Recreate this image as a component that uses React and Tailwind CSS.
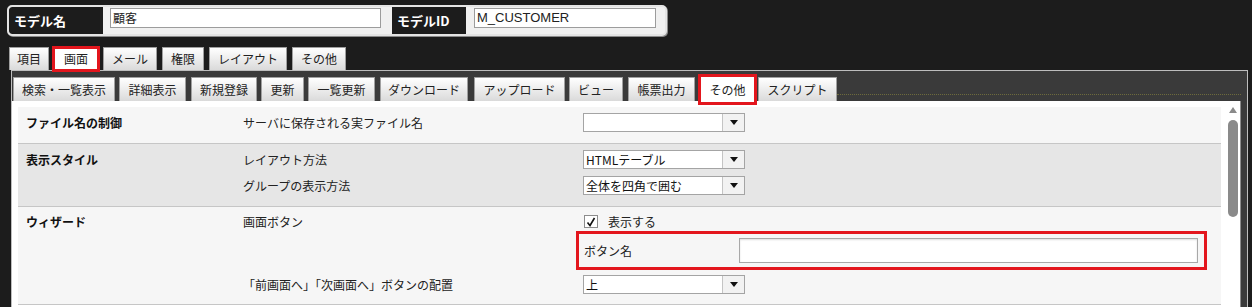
import React from "react";

/*
  モデル設定画面（画面タブ > その他）
  - ヘッダー: モデル名 / モデルID
  - 2段のタブ
  - 設定テーブル + スクロールバー
*/

const mainTabs = [
  { label: "項目", cls: "w-[40px]" },
  { label: "画面", cls: "ml-[3px] w-[48px]", active: true },
  { label: "メール", cls: "ml-[3px] w-[54px]" },
  { label: "権限", cls: "ml-[5px] w-[42px]" },
  { label: "レイアウト", cls: "ml-[5px] w-[78px]" },
  { label: "その他", cls: "ml-[5px] w-[54px]" },
];

const subTabs = [
  { label: "検索・一覧表示", cls: "w-[102px]" },
  { label: "詳細表示", cls: "ml-[4px] w-[67px]" },
  { label: "新規登録", cls: "ml-[5px] w-[66px]" },
  { label: "更新", cls: "ml-[4px] w-[43px]" },
  { label: "一覧更新", cls: "ml-[4px] w-[67px]" },
  { label: "ダウンロード", cls: "ml-[5px] w-[88px]" },
  { label: "アップロード", cls: "ml-[6px] w-[91px]" },
  { label: "ビュー", cls: "ml-[4px] w-[54px]" },
  { label: "帳票出力", cls: "ml-[5px] w-[67px]" },
  { label: "その他", cls: "ml-[3px] w-[59px]", active: true },
  { label: "スクリプト", cls: "ml-[1px] w-[79px]" },
];

export default function App() {
  return (
    <div className="w-[1252px] h-[307px] overflow-hidden bg-[#1c1c1c] font-['Noto_Sans_CJK_JP',sans-serif] text-[12px] text-[#222]">
      {/* Header */}
      <div className="pt-[5px] pl-[7px]">
        <div className="flex w-[660px] h-[31px] rounded-[5px] border-2 border-[#e4e4e4] bg-[#f0f0f0] shadow-[1px_1px_0_#8a8a8a] overflow-hidden">
          <HeaderLabel text="モデル名" cls="w-[94px] rounded-l-[3px]" />
          <div className="w-[289px] pl-[7px] pt-[1px]">
            <div className="w-[271px] h-[20px] border border-[#9c9c9c] bg-white pl-[2px] leading-[18px]">顧客</div>
          </div>
          <HeaderLabel text="モデルID" cls="w-[74px]" />
          <div className="w-[199px] pl-[8px] pt-[1px]">
            <div className="w-[182px] h-[20px] border border-[#9c9c9c] bg-white pl-[2px] leading-[18px] font-['Liberation_Sans',sans-serif] text-[13px]">M_CUSTOMER</div>
          </div>
        </div>
      </div>

      {/* Main tabs */}
      <div className="mt-[10px] flex h-[26px] items-start pl-[9px]">
        {mainTabs.map((t) => (
          <Tab key={t.label} {...t} h="h-[23px] mt-[1px]" activeH="h-[26px]" />
        ))}
      </div>

      {/* Main panel */}
      <div className="-mt-[2px] ml-[11px] w-[1237px] h-[240px] border border-[#bdbdbd] bg-[#3a3a3a]">
        <div className="flex h-[30px] items-start pl-[1px]">
          {subTabs.map((t) => (
            <Tab key={t.label} {...t} h="h-[24px] mt-[6px]" activeH="h-[31px] mt-[3px]" />
          ))}
          <div className="flex-1 mt-[23px] mr-[6px] border-b border-dotted border-[#6d6a3c]" />
        </div>

        <div className="flex w-[1229px] h-[210px] bg-white border-r border-[#8c8c8c]">
          <div className="ml-[6px] mt-[6px] w-[1203px]">
            {/* ファイル名の制御 */}
            <div className="flex bg-[#f6f6f6] border-b border-[#c6c6c6] pt-[6px] pb-[11px]">
              <Col1>ファイル名の制御</Col1>
              <Col2>サーバに保存される実ファイル名</Col2>
              <Select value="" />
            </div>

            {/* 表示スタイル */}
            <div className="flex bg-[#e6e6e6] border-b border-[#c6c6c6] pt-[6px] pb-[11px]">
              <Col1>表示スタイル</Col1>
              <div className="w-[340px] flex flex-col gap-[7px]">
                <div className="h-[19px] leading-[19px]">レイアウト方法</div>
                <div className="h-[19px] leading-[19px]">グループの表示方法</div>
              </div>
              <div className="flex flex-col gap-[7px]">
                <Select value="HTMLテーブル" />
                <Select value="全体を四角で囲む" />
              </div>
            </div>

            {/* ウィザード */}
            <div className="bg-[#f6f6f6] border-b border-[#c6c6c6] pt-[5px] pb-[10px]">
              <div className="flex">
                <Col1>ウィザード</Col1>
                <Col2>画面ボタン</Col2>
                <div className="pl-[1px] flex items-center h-[19px]">
                  <Checkbox />
                  <span className="ml-[10px]">表示する</span>
                </div>
              </div>
              <div className="flex">
                <div className="w-[558px]" />
                <div className="flex items-center w-[631px] h-[39px] border-[3px] border-[#e3161d] pl-[5px]">
                  <div className="w-[155px]">ボタン名</div>
                  <div className="w-[459px] h-[25px] border border-[#a8a8a8] bg-white shadow-[inset_0_1px_2px_#ddd]" />
                </div>
              </div>
              <div className="flex mt-[5px]">
                <div className="w-[225px]" />
                <Col2>「前画面へ」「次画面へ」ボタンの配置</Col2>
                <Select value="上" />
              </div>
            </div>
          </div>

          {/* Scrollbar */}
          <div className="ml-[7px] mt-[6px] w-[10px] flex flex-col items-center">
            <svg width="8" height="6" viewBox="0 0 8 6">
              <path d="M4 0 L8 6 L0 6 Z" fill="#8a8a8a" />
            </svg>
            <div className="mt-[7px] w-[10px] h-[97px] rounded-full bg-[#8a8a8a]" />
          </div>
        </div>
      </div>
    </div>
  );
}

/* Subcomponentes */
function HeaderLabel({ text, cls }) {
  return (
    <div className={`${cls} bg-[#1c1c1c] text-white font-bold text-[13px] flex items-center pl-[5px]`}>
      {text}
    </div>
  );
}

function Tab({ label, cls, active, h, activeH }) {
  if (active) {
    return (
      <div className={`${cls} ${activeH} relative z-10 flex items-center justify-center border-[3px] border-[#e3161d] bg-white`}>
        {label}
      </div>
    );
  }
  return (
    <div className={`${cls} ${h} flex items-center justify-center border border-b-0 border-[#a0a0a0] bg-gradient-to-b from-white to-[#dadada]`}>
      {label}
    </div>
  );
}

function Col1({ children }) {
  return <div className="w-[225px] pl-[8px] h-[19px] leading-[19px] font-bold text-[#111]">{children}</div>;
}

function Col2({ children }) {
  return <div className="w-[340px] h-[19px] leading-[19px]">{children}</div>;
}

function Select({ value }) {
  return (
    <div className="flex w-[162px] h-[19px] border border-[#a4a4a4] bg-white">
      <div className="flex-1 pl-[2px] leading-[17px] text-[#111]">{value}</div>
      <div className="w-[22px] border-l border-[#c4c4c4] bg-[#f2f2f2] flex items-center justify-center">
        <svg width="8" height="5" viewBox="0 0 8 5">
          <path d="M0 0 L8 0 L4 5 Z" fill="#111" />
        </svg>
      </div>
    </div>
  );
}

function Checkbox() {
  return (
    <div className="w-[14px] h-[13px] border border-[#8c8c8c] bg-white flex items-center justify-center">
      <svg width="10" height="10" viewBox="0 0 10 10">
        <path d="M1.5 5.5 L4 8.5 L8.5 1" fill="none" stroke="#111" strokeWidth="1.6" />
      </svg>
    </div>
  );
}
